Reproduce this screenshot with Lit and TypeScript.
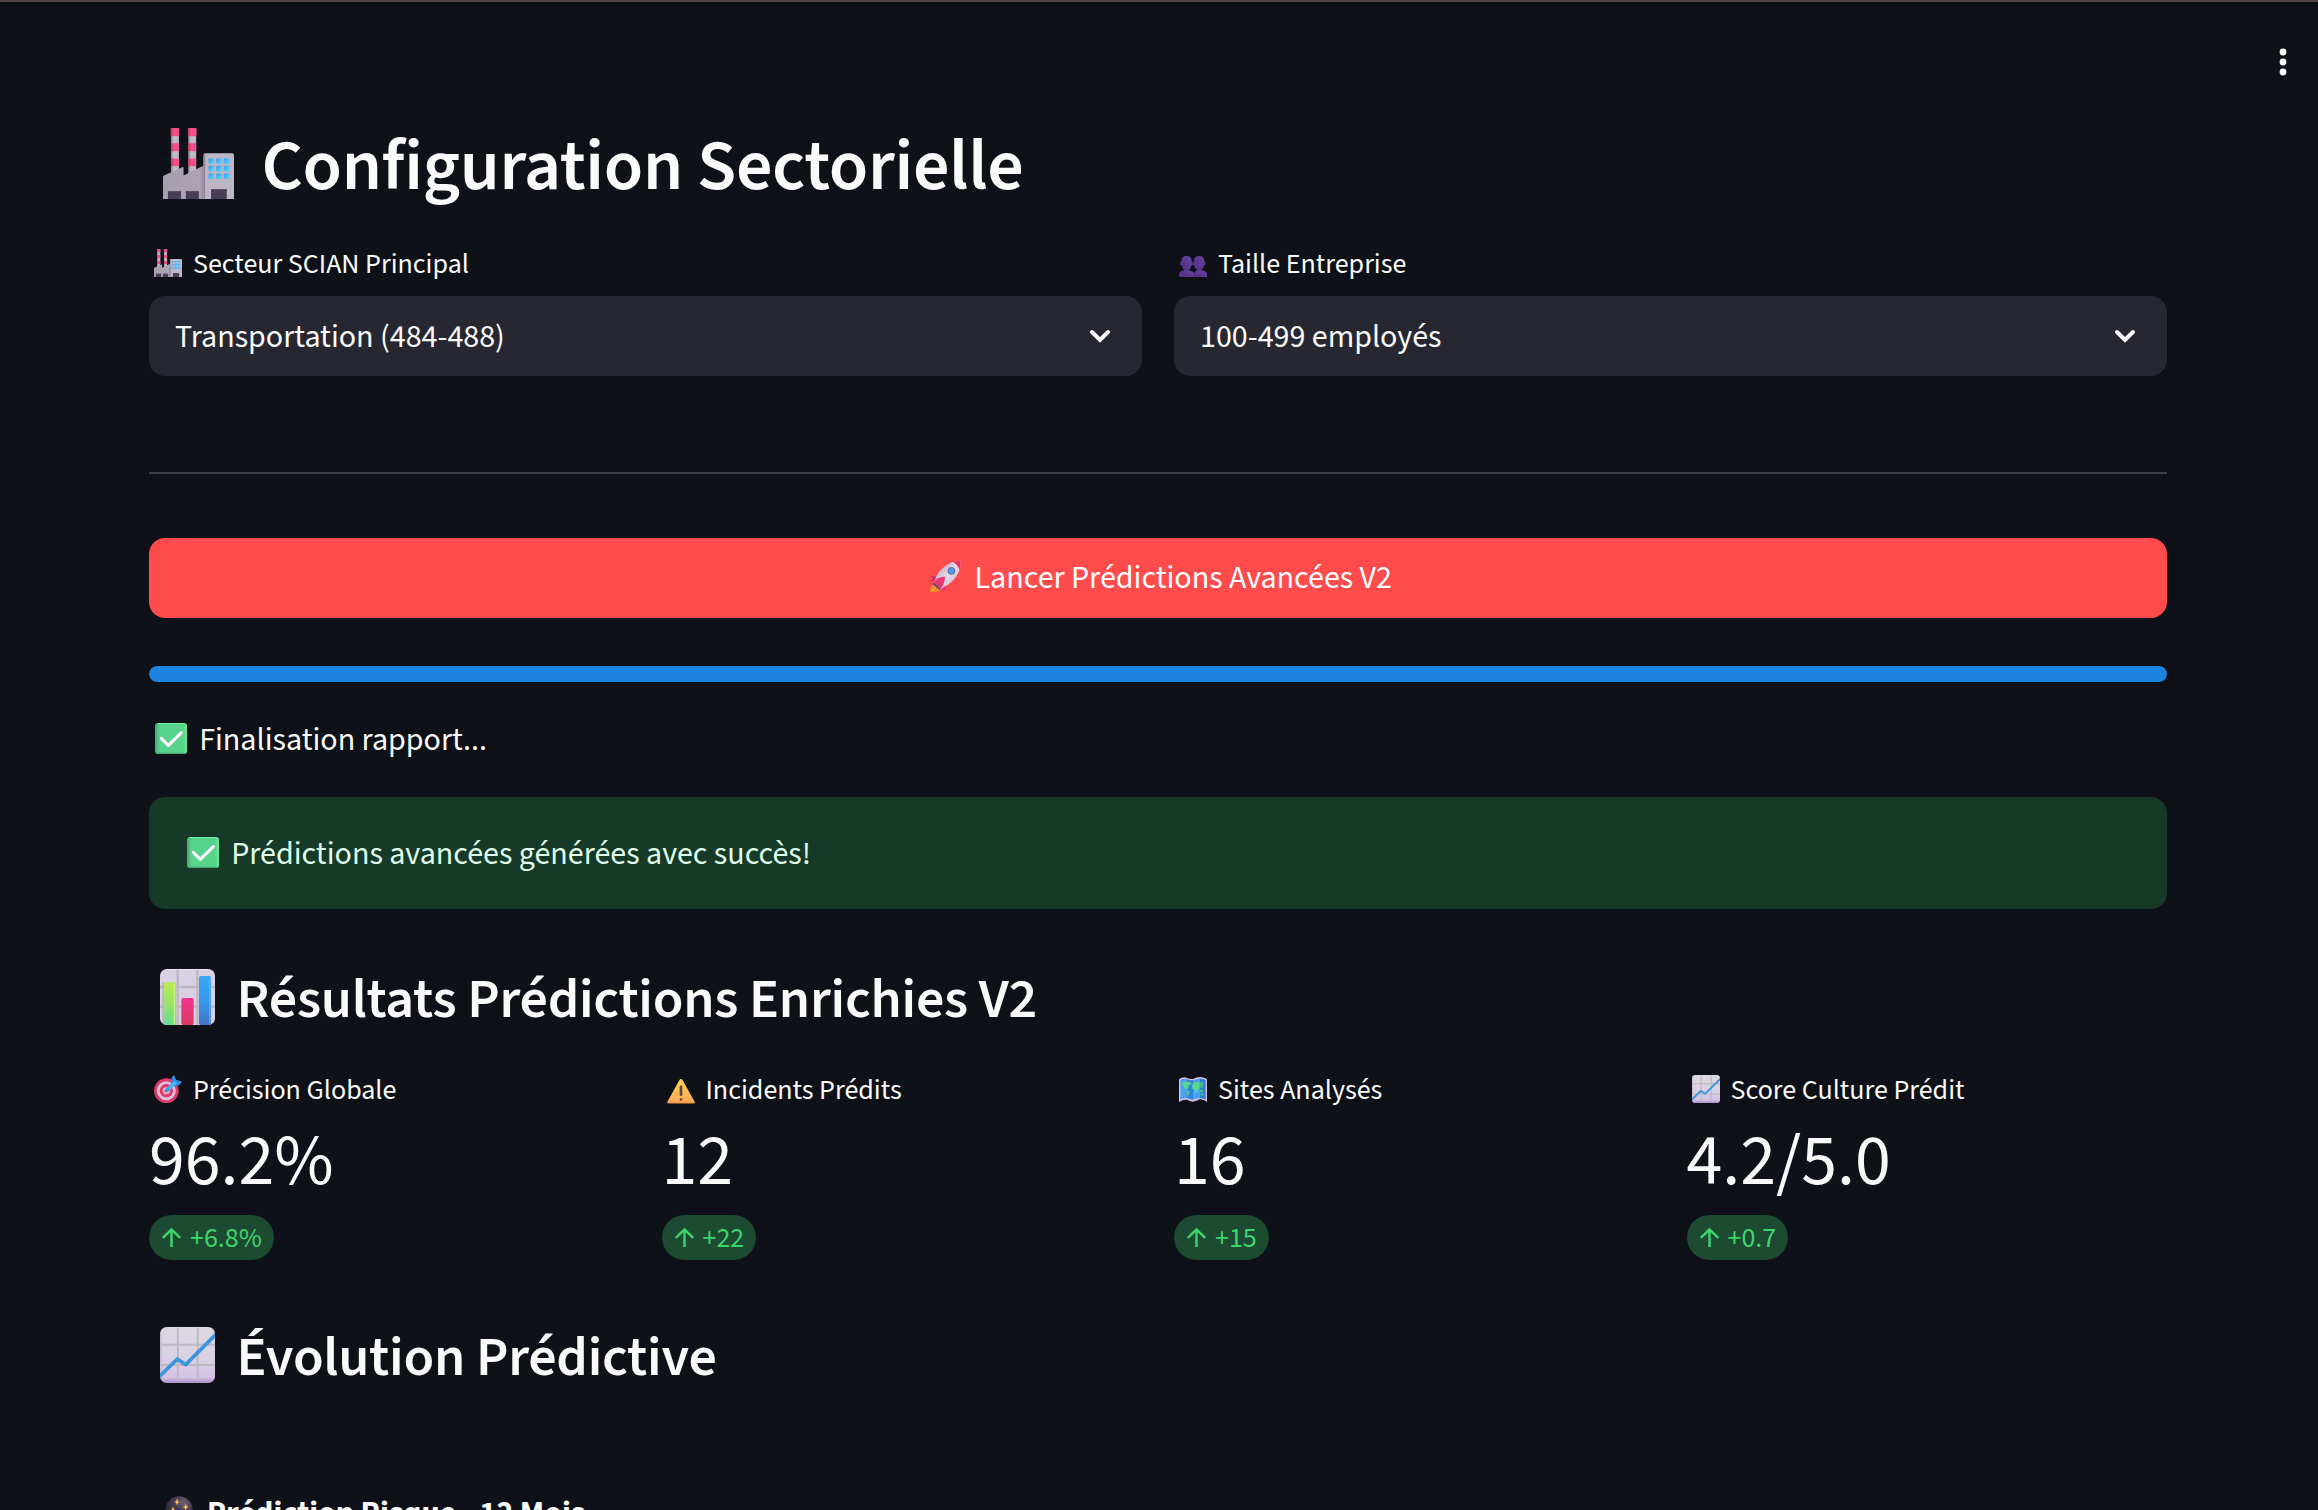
import { LitElement, html, css, svg, type TemplateResult } from "lit";
import { customElement, property } from "lit/decorators.js";

type Glyph = { w: number; h: number; body: TemplateResult };

const cells = [0, 1, 2].flatMap((r) => [0, 1, 2].map((c) => [137 + c * 23, 91 + r * 23]));

const glyphs: Record<string, Glyph> = {
  factory: {
    w: 214,
    h: 214,
    body: svg`
      <defs>
        <linearGradient id="pipe" x1="0" x2="1"><stop offset="0" stop-color="#8e8790"/><stop offset=".35" stop-color="#c3bcc6"/><stop offset="1" stop-color="#bdb6c0"/></linearGradient>
        <linearGradient id="band" x1="0" x2="1"><stop offset="0" stop-color="#b8405e"/><stop offset=".4" stop-color="#fb4f8d"/><stop offset="1" stop-color="#ee4b85"/></linearGradient>
        <linearGradient id="hall" x1="0" x2="1"><stop offset="0" stop-color="#a79fac"/><stop offset=".9" stop-color="#aea3b6"/><stop offset="1" stop-color="#8f8796"/></linearGradient>
        <linearGradient id="pane" x1="0" y1="0" x2="1" y2="1"><stop offset="0" stop-color="#3d9cf0"/><stop offset="1" stop-color="#55dcff"/></linearGradient>
      </defs>
      ${[24, 76].map((x) => svg`
        <rect x=${x} y="2" width="24" height="140" fill="url(#pipe)"/>
        <rect x=${x - 1} y="0" width="26" height="25" rx="4" fill="url(#band)"/>
        <rect x=${x} y="46" width="24" height="24" fill="url(#band)"/>
        <rect x=${x} y="92" width="24" height="23" fill="url(#band)"/>`)}
      <path d="M0 214V148q0-3 3-5L58 118q4-1 4 3v22L118 115q5-2 6 3v96z" fill="url(#hall)"/>
      <path d="M122 82q0-6 6-6h80q6 0 6 6v132h-92z" fill="#bdb6c6"/>
      <path d="M122 82q0-6 5-6v138h-5z" fill="#8f8798"/>
      ${cells.map(([x, y]) => svg`<rect x=${x} y=${y} width="17" height="17" rx="3" fill="url(#pane)"/>`)}
      <path d="M15 190h39v24H15zM69 190h39v24H69zM145 184h47v30h-47z" fill="#493c55"/>
      <path d="M15 190h39v4H15zM69 190h39v4H69zM145 184h47v4h-47z" fill="#5b4a66"/>`,
  },
  busts: {
    w: 84,
    h: 64,
    body: svg`
      <defs><linearGradient id="bust" x1="0" x2="1" y1="1" y2="0"><stop offset="0" stop-color="#4c2f80"/><stop offset="1" stop-color="#6a43a4"/></linearGradient></defs>
      ${[0, 38].map((x) => svg`
        <ellipse cx=${x + 6.5} cy="23" rx="4" ry="6" fill="#4b2d7b"/>
        <ellipse cx=${x + 38.5} cy="23" rx="4" ry="6" fill="#4b2d7b"/>
        <path d="M${x + 15} 36h16v12h-16z" fill="#452a72"/>
        <path d="M${x + 7} 16q0-16 15.500-16t15.500 16v12q-3 14-15.500 14t-15.500-14z" fill="url(#bust)"/>`)}
      <path d="M0 64V56q1-12 22-13 22 1 24 13v8z" fill="url(#bust)"/>
      <path d="M44 64V54q4-10 18-11 21 1 22 13v8z" fill="url(#bust)"/>`,
  },
  rocket: {
    w: 94,
    h: 94,
    body: svg`
      <defs><linearGradient id="hull" x1="0" y1="0" x2="1" y2="1"><stop offset=".2" stop-color="#b9a9c2"/><stop offset=".5" stop-color="#e6dbea"/><stop offset="1" stop-color="#c5b3cf"/></linearGradient></defs>
      <path d="M12 70q8-5 20 10 0 10-14 13L0 94q-2-14 12-24z" fill="#f7912b"/>
      <path d="M30 44 14 46 3 44l4 8-5 10 14 0 12-8z" fill="#d8305f"/>
      <path d="M48 62l0 18-6 14-8-12-2-10z" fill="#f0307f"/>
      <path d="M12 66Q22 24 66 4q14-5 26-3 2 14-4 30Q74 66 32 84z" fill="url(#hull)"/>
      <path d="M70 3q12-4 22-2 2 12-3 27-3-16-19-25z" fill="#e2305f"/>
      <path d="M12 66q4-16 34-19-2 26-15 37z" fill="#ee3474"/>
      <path d="M10 65l22 19-4 3L8 70z" fill="#4b4576"/>
      <circle cx="65" cy="30" r="11.500" fill="#66789f"/>
      <circle cx="65" cy="30" r="8" fill="#4a9df2"/>`,
  },
  check: {
    w: 96,
    h: 93,
    body: svg`
      <defs><linearGradient id="tick" x1="0" x2="1"><stop offset="0" stop-color="#48a873"/><stop offset=".14" stop-color="#57d38b"/><stop offset=".88" stop-color="#58d58d"/><stop offset="1" stop-color="#6aeb9f"/></linearGradient></defs>
      <rect width="96" height="93" rx="9" fill="url(#tick)"/>
      <path d="M8 1.500h80" stroke="#6df0a0" stroke-width="3"/><path d="M7 91h82" stroke="#46a674" stroke-width="4"/>
      <path d="M19 46 40 67 79 29" fill="none" stroke="#fcf3fd" stroke-width="9.500" stroke-linecap="round" stroke-linejoin="round"/>`,
  },
  bars: {
    w: 165,
    h: 168,
    body: svg`
      <defs>
        <linearGradient id="lime" x1="0" x2="0" y1="0" y2="1"><stop offset="0" stop-color="#b9ec55"/><stop offset=".5" stop-color="#9be269"/><stop offset="1" stop-color="#66dc93"/></linearGradient>
        <linearGradient id="rose" x1="0" x2="0" y1="0" y2="1"><stop offset="0" stop-color="#f03590"/><stop offset="1" stop-color="#dc3a60"/></linearGradient>
        <linearGradient id="azure" x1="0" x2="0" y1="0" y2="1"><stop offset="0" stop-color="#35a6f4"/><stop offset=".5" stop-color="#3799ec"/><stop offset="1" stop-color="#4472c6"/></linearGradient>
      </defs>
      <rect width="165" height="168" rx="20" fill="#d8d1e1"/>
      <path d="M20 1.500h125" stroke="#efe9f3" stroke-width="3"/>
      <path d="M53 2v166M112 2v166M0 54h165M0 113h165" stroke="#bdb6c3" stroke-width="7"/>
      <path d="M6 40h41v128H16q-10-2-10-14z" fill="#a99ab7" opacity=".5"/>
      <rect x="11" y="40" width="36" height="128" rx="5" fill="url(#lime)"/>
      <rect x="64" y="87" width="37" height="81" rx="5" fill="url(#rose)"/>
      <rect x="117" y="21" width="36" height="147" rx="5" fill="url(#azure)"/>
      <path d="M43 45v121" stroke="#caf77a" stroke-width="3"/><path d="M149 28v136" stroke="#55b9ff" stroke-width="3"/>`,
  },
  trend: {
    w: 165,
    h: 168,
    body: svg`
      <defs>
        <linearGradient id="sheet" x1="0" x2="0" y1="0" y2="1"><stop offset="0" stop-color="#dbd8df"/><stop offset=".6" stop-color="#d9d0e4"/><stop offset=".9" stop-color="#d3c2e4"/><stop offset="1" stop-color="#a98cc8"/></linearGradient>
        <clipPath id="page"><rect width="165" height="168" rx="20"/></clipPath>
      </defs>
      <g clip-path="url(#page)">
        <rect width="165" height="168" fill="url(#sheet)"/>
        <path d="M53.500 2v160M113 2v160M0 53h165M0 114h165" stroke="#bdb8c4" stroke-width="6"/>
        <path d="M3 20v130" stroke="#c6bad2" stroke-width="5"/>
        <path d="M-6 153 52 96 77 113 172 18" fill="none" stroke="#3b95dd" stroke-width="11" stroke-linejoin="round"/>
      </g>`,
  },
  target: {
    w: 84,
    h: 84,
    body: svg`
      <circle cx="37" cy="47" r="37" fill="#e4386a"/>
      <circle cx="37" cy="47" r="28.500" fill="#d9c3da"/>
      <circle cx="37" cy="47" r="20" fill="#e73568"/>
      <circle cx="37" cy="47" r="11" fill="#c9b6cc"/>
      <circle cx="37" cy="47" r="5" fill="#8e7c97"/>
      <path d="M40 44 62 22" stroke="#2f9ce9" stroke-width="10" stroke-linecap="round"/>
      <path d="M50 26 53 8 60 0l6 14 18 6-8 10-17 5z" fill="#2e8fe6"/>
      <path d="M42 36 62 18l6 6-18 20z" fill="#4db8f0"/>`,
  },
  warning: {
    w: 84,
    h: 73,
    body: svg`
      <defs><linearGradient id="amber" x1="0" x2="0" y1="0" y2="1"><stop offset="0" stop-color="#ffd451"/><stop offset=".9" stop-color="#ffac58"/><stop offset="1" stop-color="#f08b43"/></linearGradient></defs>
      <path d="M42 0q3 0 5 4l36 64q2 5-3 5H4q-5 0-3-5L37 4q2-4 5-4z" fill="url(#amber)"/>
      <path d="M42 23v24" stroke="#574751" stroke-width="8" stroke-linecap="round"/><circle cx="42" cy="61" r="4" fill="#574751"/>`,
  },
  map: {
    w: 84,
    h: 76,
    body: svg`
      <path d="M0 7Q12-2 22 2 32 7 42 6 52 0 64 0 76 1 84 7V76Q74 67 62 68 52 74 42 75 32 73 24 69 12 68 0 76z" fill="#d9bfe0"/>
      <path d="M4 9Q14 3 22 6V64Q12 63 4 69z" fill="#47a3f5"/>
      <path d="M22 6q10 5 20 4v59q-10-1-20-5z" fill="#2f86dd"/>
      <path d="M42 10q10-4 21-5v59q-11 1-21 5z" fill="#47a3f5"/>
      <path d="M63 5q10 0 17 4v60q-8-5-17-5z" fill="#2c7fd6"/>
      <path d="M7 20 15 15 34 16 38 22 30 24 27 34 21 38 15 32z" fill="#56d790"/>
      <path d="M23 40 33 43 29 55 25 58z" fill="#4cc987"/>
      <path d="M39 26 45 17 57 15 62 18V30L56 42 49 50 47 38 40 36z" fill="#56d790"/>
      <path d="M60 16 73 14V28l-4 6-6-3z" fill="#43b98a"/><path d="M63 39h9v7h-9zM65 50h9v6h-9z" fill="#43b98a"/>`,
  },
  crystal: {
    w: 28,
    h: 32,
    body: svg`
      <defs><radialGradient id="orb" cx=".66" cy=".22" r=".75"><stop offset="0" stop-color="#6a6074"/><stop offset=".45" stop-color="#453a50"/><stop offset="1" stop-color="#2b2436"/></radialGradient></defs>
      <circle cx="14" cy="14" r="13.700" fill="url(#orb)"/>
      <path d="M12 2.500l1 2.700 1.900.8-1.900.8-1 2.700-1-2.700-1.900-.8 1.900-.8zM20.700 7.500l1.100 2.700 2.200.9-2.200.9-1.100 2.700-1.100-2.700-2.200-.9 2.200-.9zM8 10.500l1.200 3 2.500 1.100-2.500 1.100L8 18.800l-1.200-3.100-2.500-1.100 2.500-1.100z" fill="#ffb95a"/>`,
  },
};

@customElement("emoji-icon")
export class EmojiIcon extends LitElement {
  static styles = css`
    :host { display: block; }
    svg { display: block; width: 100%; height: 100%; overflow: visible; }
  `;
  @property() name = "check";
  render() {
    const g = glyphs[this.name];
    return html`<svg viewBox="0 0 ${g.w} ${g.h}" preserveAspectRatio="none" aria-hidden="true">${g.body}</svg>`;
  }
}

@customElement("select-field")
export class SelectField extends LitElement {
  static styles = css`
    :host { display: block; }
    .label { display: flex; align-items: flex-start; height: 40px; margin-bottom: 12px; font-size: 28px; line-height: 40px; }
    .icon { flex: none; width: 28px; height: 28px; margin: 5px 11px 0 5px; }
    .icon.busts { height: 21px; margin-top: 12px; }
    .box { display: flex; align-items: center; justify-content: space-between; box-sizing: border-box; height: 80px; padding: 2px 32px 0 26px; border-radius: 16px; background: #262730; font-size: 32px; line-height: 46px; }
    .chevron { width: 20px; height: 12px; margin-top: -2px; overflow: visible; }
  `;
  @property() icon = "";
  @property() label = "";
  @property() value = "";
  render() {
    return html`
      <div class="label"><emoji-icon class="icon ${this.icon}" name=${this.icon}></emoji-icon><span>${this.label}</span></div>
      <div class="box">
        <span>${this.value}</span>
        <svg class="chevron" viewBox="0 0 20 12"><path d="M2 2l8 8 8-8" fill="none" stroke="#fafafa" stroke-width="4" stroke-linecap="round" stroke-linejoin="miter"/></svg>
      </div>`;
  }
}

@customElement("metric-tile")
export class MetricTile extends LitElement {
  static styles = css`
    :host { display: block; }
    .label { display: flex; align-items: flex-start; height: 40px; font-size: 28px; line-height: 40px; }
    .icon { flex: none; width: 28px; height: 28px; margin: 5px 11px 0 5px; }
    .icon.warning { height: 24.500px; margin-top: 8.500px; }
    .icon.map { height: 25px; margin-top: 7px; }
    .value { margin-top: 8px; font-size: 72px; line-height: 87px; }
    .delta { display: inline-flex; align-items: flex-start; box-sizing: border-box; height: 45px; margin-top: 10px; padding: 3px 12px 0 13px; border-radius: 23px; background: #1d4b31; color: #3dd56d; font-size: 28px; line-height: 40px; vertical-align: top; }
    .arrow { width: 19px; height: 19px; margin: 10px 9px 0 0; }
  `;
  @property() icon = "";
  @property() label = "";
  @property() value = "";
  @property() delta = "";
  render() {
    return html`
      <div class="label"><emoji-icon class="icon ${this.icon}" name=${this.icon}></emoji-icon><span>${this.label}</span></div>
      <div class="value">${this.value}</div>
      <div class="delta">
        <svg class="arrow" viewBox="0 0 19 19"><path d="M9.500 19V1.500M.8 10 9.500 1.400 18.200 10" fill="none" stroke="currentColor" stroke-width="2.400"/></svg>
        <span>${this.delta}</span>
      </div>`;
  }
}

const metrics = [
  { icon: "target", label: "Précision Globale", value: "96.2%", delta: "+6.8%" },
  { icon: "warning", label: "Incidents Prédits", value: "12", delta: "+22" },
  { icon: "map", label: "Sites Analysés", value: "16", delta: "+15" },
  { icon: "trend", label: "Score Culture Prédit", value: "4.2/5.0", delta: "+0.7" },
];

@customElement("app-root")
export class AppRoot extends LitElement {
  static styles = css`
    :host {
      display: flex; flex-direction: column; box-sizing: border-box; height: 1510px; overflow: hidden;
      border-top: 2px solid #514549; background: #0e1117; color: #fafafa;
      font-family: "Source Sans 3", "Noto Sans CJK JP", sans-serif; font-size: 32px; line-height: 46px;
    }
    .toolbar { flex: none; display: flex; justify-content: flex-end; box-sizing: border-box; height: 121px; padding: 46px 31px 0 0; }
    .menu { width: 8px; height: 28px; }
    .content { flex: none; margin: 0 151px 0 149px; }
    .title, .heading { display: flex; align-items: flex-start; margin: 0; font-weight: 600; letter-spacing: -0.005em; }
    .title { font-size: 72px; line-height: 87px; }
    .title .icon { width: 71px; height: 71px; margin: 5px 27.500px 0 14px; }
    .heading { font-size: 56px; line-height: 67px; }
    .heading .icon { width: 55px; height: 56px; margin: 3px 21.500px 0 11px; }
    .icon { flex: none; }
    .fields { display: grid; grid-template-columns: 1fr 1fr; gap: 32px; margin-top: 34px; }
    .rule { height: 2px; margin-top: 96px; background: #3d4044; }
    .launch { display: flex; justify-content: center; box-sizing: border-box; width: 100%; height: 80px; margin: 64px 0 0; padding: 17px 0 0; border: 0; border-radius: 16px; background: #ff4b4b; color: #fff; font: inherit; }
    .launch .icon { width: 31px; height: 31px; margin: 6px 13.500px 0 6px; }
    .progress { height: 16px; margin-top: 48px; border-radius: 8px; background: #262730; overflow: hidden; }
    .bar { height: 100%; border-radius: 8px; background: #1c83e1; }
    .status { display: flex; margin-top: 35px; }
    .status .icon, .alert .icon { width: 32px; height: 31px; margin: 6px 12.200px 0 6px; }
    .alert { display: flex; box-sizing: border-box; height: 112px; margin: 34px 0 57px; padding: 34px 32px 0; border-radius: 16px; background: #173928; color: #dffde9; }
    .metrics { display: grid; grid-template-columns: repeat(4, 1fr); gap: 32px; margin: 37px 0 64px; }
    .chart-title { display: flex; margin: 99px 0 0 16px; font-weight: 700; }
    .chart-title .icon { width: 28px; height: 32px; margin: 5.500px 14px 0 0; }
  `;
  @property({ type: Number }) progress = 100;
  render() {
    return html`
      <header class="toolbar">
        <svg class="menu" viewBox="0 0 8 28" fill="#fafafa"><circle cx="4" cy="4" r="3.400"/><circle cx="4" cy="14" r="3.400"/><circle cx="4" cy="24" r="3.400"/></svg>
      </header>
      <main class="content">
        <h1 class="title"><emoji-icon class="icon" name="factory"></emoji-icon><span>Configuration Sectorielle</span></h1>
        <section class="fields">
          <select-field icon="factory" label="Secteur SCIAN Principal" value="Transportation (484-488)"></select-field>
          <select-field icon="busts" label="Taille Entreprise" value="100-499 employés"></select-field>
        </section>
        <div class="rule"></div>
        <button class="launch"><emoji-icon class="icon" name="rocket"></emoji-icon><span>Lancer Prédictions Avancées V2</span></button>
        <div class="progress"><div class="bar" style="width:${this.progress}%"></div></div>
        <div class="status"><emoji-icon class="icon" name="check"></emoji-icon><span>Finalisation rapport...</span></div>
        <div class="alert"><emoji-icon class="icon" name="check"></emoji-icon><span>Prédictions avancées générées avec succès!</span></div>
        <h3 class="heading"><emoji-icon class="icon" name="bars"></emoji-icon><span>Résultats Prédictions Enrichies V2</span></h3>
        <section class="metrics">
          ${metrics.map((m) => html`<metric-tile icon=${m.icon} label=${m.label} value=${m.value} delta=${m.delta}></metric-tile>`)}
        </section>
        <h3 class="heading"><emoji-icon class="icon" name="trend"></emoji-icon><span>Évolution Prédictive</span></h3>
        <div class="chart-title"><emoji-icon class="icon" name="crystal"></emoji-icon><span>Prédiction Risque - 12 Mois</span></div>
      </main>`;
  }
}
